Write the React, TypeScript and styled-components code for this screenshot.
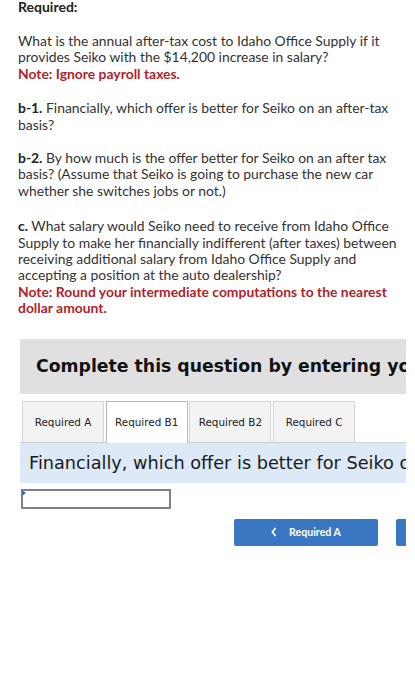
import React from "react";
import styled, { createGlobalStyle } from "styled-components";

const GlobalStyle = createGlobalStyle`
  html, body {
    margin: 0;
    padding: 0;
    background: #ffffff;
  }
`;

const Page = styled.div`
  width: 388px;
  padding-left: 18px;
  overflow: hidden;
  font-family: Lato, "Open Sans", sans-serif;
  color: #333333;
`;

const Heading = styled.div`
  margin-top: -2px;
  font-size: 14px;
  line-height: 17px;
  font-weight: 700;
  color: #222222;
`;

const Para = styled.p<{ $gap?: number }>`
  margin: ${(p) => p.$gap ?? 17}px 0 0;
  font-size: 13.9px;
  line-height: 16.4px;
`;

const Lead = styled.b`
  color: #222222;
`;

const Note = styled.span`
  display: block;
  color: #b0222c;
  font-weight: 700;
`;

const Banner = styled.div`
  margin: 22px 0 0 2px;
  height: 55px;
  display: flex;
  align-items: center;
  padding-left: 16px;
  background: #e0e0e0;
  white-space: nowrap;
  font-family: "DejaVu Sans", Verdana, sans-serif;
  font-weight: 700;
  font-size: 17.3px;
  color: #111111;
`;

const Tabs = styled.div`
  margin: 7px 0 0 2px;
  display: flex;
  gap: 1.7px;
  padding-left: 2px;
  border-bottom: 1px solid #d0d0d0;
`;

const Tab = styled.div<{ $active?: boolean }>`
  width: 82px;
  display: flex;
  align-items: center;
  justify-content: center;
  box-sizing: border-box;
  font-family: "DejaVu Sans", Verdana, sans-serif;
  font-size: 10.4px;
  color: #222222;
  background: ${(p) => (p.$active ? "#ffffff" : "#f3f3f3")};
  border: 1px solid ${(p) => (p.$active ? "#b8b8b8" : "#d6d6d6")};
  border-bottom: none;
  margin-bottom: ${(p) => (p.$active ? "-1px" : "0")};
  height: ${(p) => (p.$active ? "42px" : "41px")};
`;

const Prompt = styled.div`
  margin-left: 2px;
  height: 40px;
  display: flex;
  align-items: center;
  padding-left: 9px;
  background: #dde9f7;
  white-space: nowrap;
  font-family: "DejaVu Sans", Verdana, sans-serif;
  font-size: 17.7px;
  color: #1a1a1a;
`;

const Answer = styled.div`
  position: relative;
  margin: 6px 0 0 3px;
  width: 150px;
  height: 20px;
  box-sizing: border-box;
  border: 2px solid #7c818a;
  background: #ffffff;

  &::before {
    content: "";
    position: absolute;
    left: -1px;
    top: -1px;
    border-top: 3px solid transparent;
    border-bottom: 3px solid transparent;
    border-left: 4px solid #3a6fb5;
  }
`;

const NavRow = styled.div`
  margin-top: 10px;
  padding-left: 216px;
  display: flex;
  gap: 18px;
  padding-bottom: 150px;
`;

const NavButton = styled.div`
  flex: none;
  width: 144px;
  height: 27px;
  display: flex;
  align-items: center;
  justify-content: center;
  gap: 12px;
  background: #3a77c2;
  border-radius: 2px;
  color: #ffffff;
  font-family: Lato, "Open Sans", sans-serif;
  font-weight: 700;
  font-size: 10.6px;
`;

const Chevron = () => (
  <svg width="6" height="10" viewBox="0 0 6 10">
    <path d="M4.6 1 L1.4 5 L4.6 9" stroke="#ffffff" strokeWidth="1.7" fill="none" />
  </svg>
);

export default function App() {
  return (
    <>
      <GlobalStyle />
      <Page>
        <Heading>Required:</Heading>
        <Para $gap={18}>
          What is the annual after-tax cost to Idaho Office Supply if it provides Seiko with the $14,200 increase in salary?
          <Note>Note: Ignore payroll taxes.</Note>
        </Para>
        <Para $gap={18}>
          <Lead>b-1.</Lead> Financially, which offer is better for Seiko on an after-tax basis?
        </Para>
        <Para>
          <Lead>b-2.</Lead> By how much is the offer better for Seiko on an after tax basis? (Assume that Seiko is going to purchase the new car whether she switches jobs or not.)
        </Para>
        <Para $gap={19}>
          <Lead>c.</Lead> What salary would Seiko need to receive from Idaho Office Supply to make her financially indifferent (after taxes) between receiving additional salary from Idaho Office Supply and accepting a position at the auto dealership?
          <Note>Note: Round your intermediate computations to the nearest dollar amount.</Note>
        </Para>
        <Banner>Complete this question by entering your answers in the tabs below.</Banner>
        <Tabs>
          <Tab>Required A</Tab>
          <Tab $active>Required B1</Tab>
          <Tab>Required B2</Tab>
          <Tab>Required C</Tab>
        </Tabs>
        <Prompt>Financially, which offer is better for Seiko on an after-tax basis?</Prompt>
        <Answer />
        <NavRow>
          <NavButton>
            <Chevron />
            Required A
          </NavButton>
          <NavButton>Required B2</NavButton>
        </NavRow>
      </Page>
    </>
  );
}
